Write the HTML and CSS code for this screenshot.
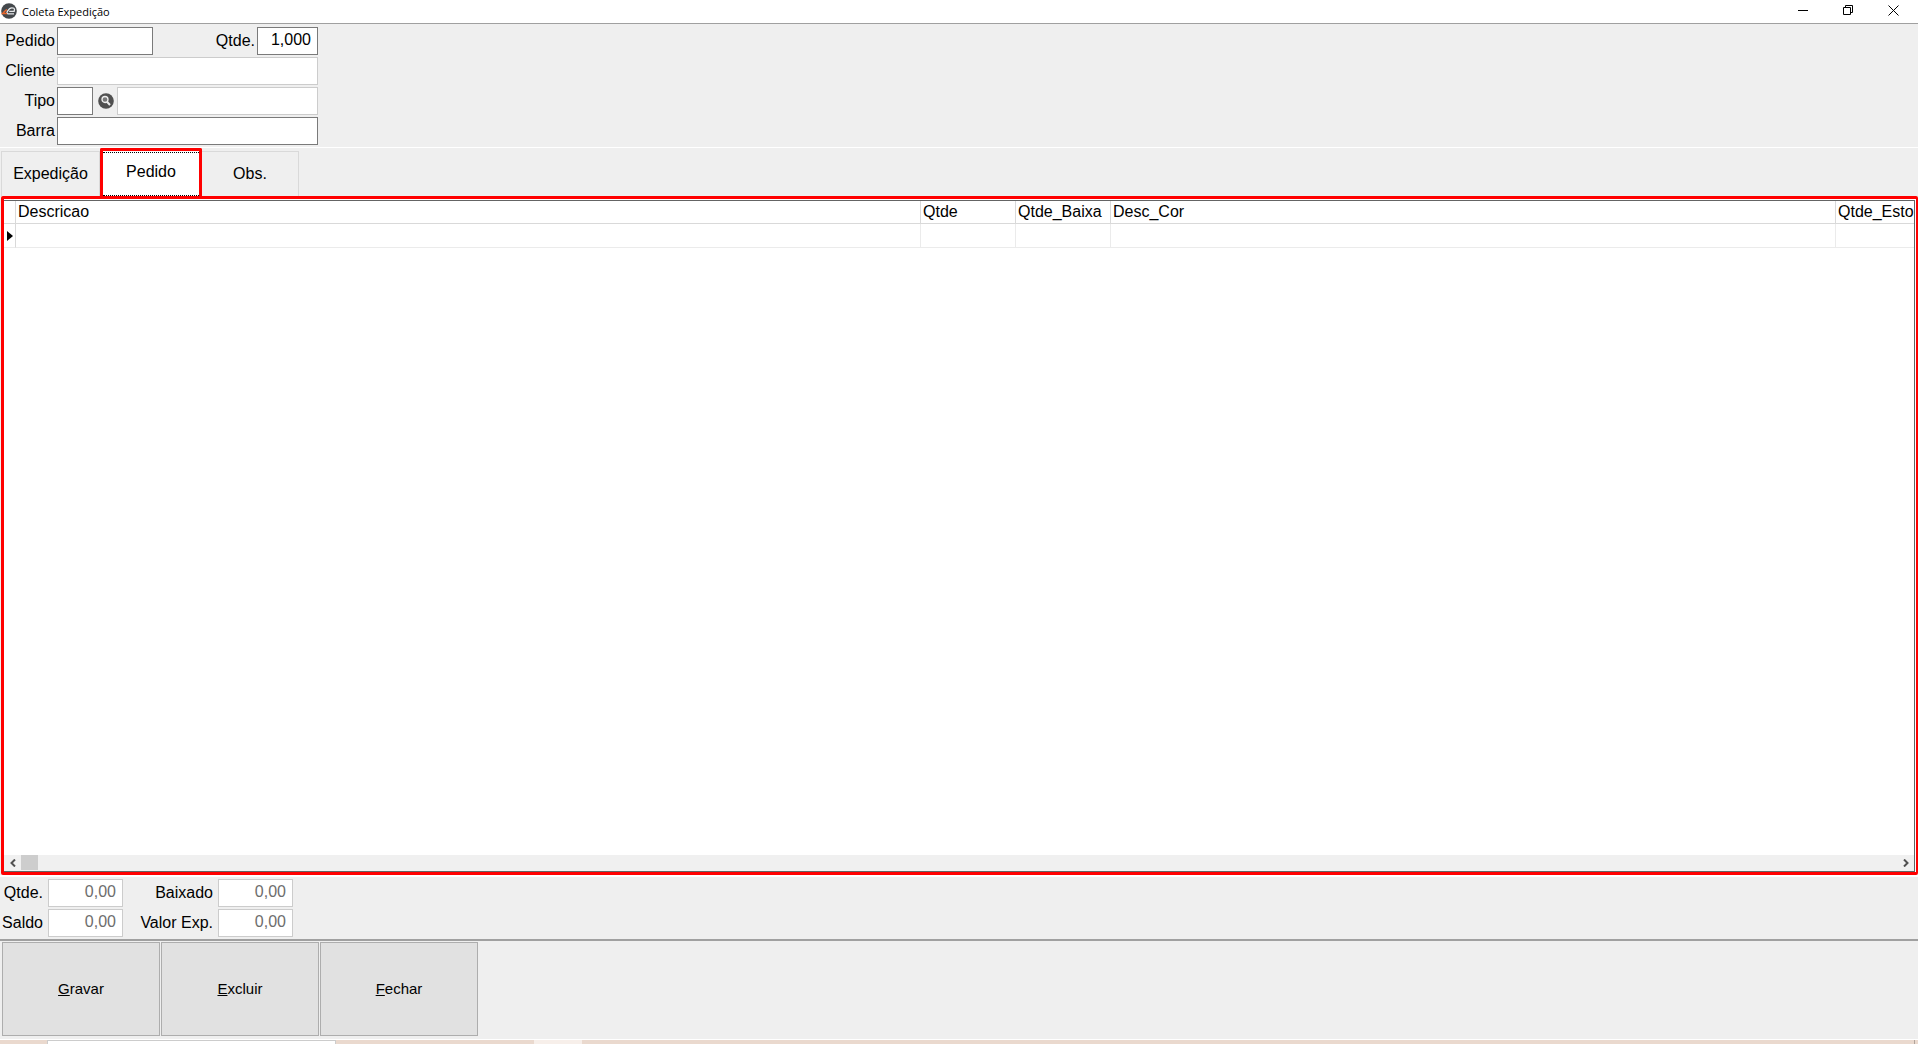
FILE: index.html
```html
<!DOCTYPE html>
<html lang="pt-BR">
<head>
<meta charset="utf-8">
<title>Coleta Expedição</title>
<link rel="stylesheet" href="styles.css">
</head>
<body>
<header class="titlebar">
  <svg class="app-icon" viewBox="0 0 16 16" aria-hidden="true">
    <circle cx="8" cy="8" r="7.800" fill="#44484c"/>
    <path d="M8.200 8.300H13.200C14.200 5.200 12.700 4.800 10.800 4.800C8.200 4.800 7.400 6.800 6.300 8.600C5.300 10.300 6.200 10.800 7.500 10.800H13" fill="none" stroke="#e6e8ea" stroke-width="1.300"/>
    <path d="M6 6.800C4.200 7.200 3.700 8.600 1.600 10.600H6" fill="none" stroke="#e8652c" stroke-width="1.500"/>
  </svg>
  <h1 class="title">Coleta Expedição</h1>
  <div class="window-controls">
    <button class="window-button" aria-label="Minimizar"><svg viewBox="0 0 11 11"><path d="M0 5.5H10" /></svg></button>
    <button class="window-button" aria-label="Restaurar"><svg viewBox="0 0 11 11"><path d="M.5 2.5H7.5V9.500H.5ZM2.500 2.500V.5H9.500V7.500H7.500"/></svg></button>
    <button class="window-button" aria-label="Fechar janela"><svg viewBox="0 0 11 11"><path d="M.5 .5L10.500 10.500M10.500 .5L.5 10.500"/></svg></button>
  </div>
</header>

<main class="window">
  <form class="order-form">
    <label class="label" for="pedido">Pedido</label>
    <div class="fields">
      <input class="field code" id="pedido" type="text">
      <label class="label push" for="quantidade">Qtde.</label>
      <input class="field quantity" id="quantidade" type="text" value="1,000">
    </div>
    <label class="label" for="cliente">Cliente</label>
    <div class="fields"><input class="field wide readonly" id="cliente" type="text" readonly></div>
    <label class="label" for="tipo">Tipo</label>
    <div class="fields">
      <input class="field type" id="tipo" type="text">
      <button class="lookup" type="button" aria-label="Pesquisar tipo">
        <svg viewBox="0 0 16 16"><circle cx="8" cy="8" r="7.8" fill="#505050"/><circle cx="7" cy="6.500" r="3" fill="#777" stroke="#eee" stroke-width="1.300"/><path d="M9.200 9L12 12" stroke="#eee" stroke-width="2"/></svg>
      </button>
      <input class="field wide readonly" type="text" aria-label="Descrição do tipo" readonly>
    </div>
    <label class="label" for="barra">Barra</label>
    <div class="fields"><input class="field wide" id="barra" type="text"></div>
  </form>

  <nav class="tabs" role="tablist">
    <button class="tab" role="tab">Expedição</button>
    <button class="tab active" role="tab" aria-selected="true"><span class="focus">Pedido</span></button>
    <button class="tab" role="tab">Obs.</button>
  </nav>

  <section class="panel">
    <div class="grid">
      <table class="items">
        <colgroup><col class="c-mark"><col class="c-name"><col class="c-num"><col class="c-num"><col class="c-color"><col></colgroup>
        <thead><tr><th></th><th>Descricao</th><th>Qtde</th><th>Qtde_Baixa</th><th>Desc_Cor</th><th>Qtde_Esto</th></tr></thead>
        <tbody><tr><td class="mark"><svg viewBox="0 0 6 10"><path d="M0 0L6 5L0 10Z"/></svg></td><td></td><td></td><td></td><td></td><td></td></tr></tbody>
      </table>
      <div class="scrollbar">
        <button class="arrow" aria-label="Rolar para a esquerda"><svg viewBox="0 0 6 8"><path d="M5 .5L1.500 4L5 7.500"/></svg></button>
        <div class="thumb"></div>
        <button class="arrow end" aria-label="Rolar para a direita"><svg viewBox="0 0 6 8"><path d="M1 .5L4.500 4L1 7.500"/></svg></button>
      </div>
    </div>
  </section>

  <section class="totals">
    <label class="label" for="total">Qtde.</label>
    <input class="field readonly total" id="total" value="0,00" readonly>
    <label class="label" for="baixado">Baixado</label>
    <input class="field readonly total" id="baixado" value="0,00" readonly>
    <label class="label" for="saldo">Saldo</label>
    <input class="field readonly total" id="saldo" value="0,00" readonly>
    <label class="label" for="valor">Valor Exp.</label>
    <input class="field readonly total" id="valor" value="0,00" readonly>
  </section>

  <footer class="actions">
    <button class="action" accesskey="g"><u>G</u>ravar</button>
    <button class="action" accesskey="e"><u>E</u>xcluir</button>
    <button class="action" accesskey="f"><u>F</u>echar</button>
  </footer>
</main>
<div class="backdrop"><span class="sheet"></span><span class="patch"></span><span class="edge"></span></div>
</body>
</html>
```
FILE: styles.css
```css
* { box-sizing: border-box; }

body {
  margin: 0;
  min-height: 100vh;
  display: flex;
  flex-direction: column;
  background: #efefef;
  color: #000;
  font: 16px/20px "Liberation Sans", Arial, sans-serif;
}

button, input { font: inherit; color: inherit; border-radius: 0; margin: 0; padding: 0; }
button { border: 0; background: none; }
svg { display: block; }

/* Title bar */
.titlebar {
  height: 24px;
  display: flex;
  align-items: center;
  padding-left: 1px;
  background: #fff;
  border-bottom: 1px solid #a0a0a0;
}
.app-icon { width: 16px; height: 16px; margin: 0 5px 2px 0; }
.title { margin: 0; font: 11px/20px "Open Sans", "Noto Sans", sans-serif; }
.window-controls { display: flex; margin-left: auto; padding: 0 2px 2px 0; }
.window-button { width: 45px; height: 20px; display: grid; place-items: center; }
.window-button svg { width: 11px; height: 11px; fill: none; stroke: #000; }

.window { flex: 1; display: flex; flex-direction: column; }

/* Order fields */
.order-form {
  display: grid;
  grid-template-columns: 55px 261px;
  gap: 2px;
  padding: 3px 0 2px;
  border-bottom: 1px solid #fff;
}
.label { line-height: 28px; text-align: right; white-space: nowrap; }
.fields { display: flex; }
.push { margin-left: auto; margin-right: 2px; }
.field {
  height: 28px;
  min-width: 0;
  border: 1px solid #7a7a7a;
  background: #fff;
  outline: 0;
}
.readonly { border-color: #ccc; color: #6d6d6d; }
.code { width: 96px; }
.quantity { width: 61px; padding: 0 6px 2px 0; text-align: right; }
.type { width: 36px; }
.wide { flex: 1; }
.lookup { width: 24px; display: grid; place-items: center; padding-left: 2px; }
.lookup svg { width: 16px; height: 16px; }

/* Tabs */
.tabs { display: flex; align-items: flex-end; padding-left: 1px; height: 48px; }
.tab { width: 99px; height: 45px; border: 1px solid #d9d9d9; border-bottom: 0; padding-bottom: 1px; }
.tab:last-child { width: 97px; border-left: 0; }
.tab.active {
  width: 102px;
  height: 48px;
  padding: 0;
  border: 3px solid #f00;
  border-bottom: 0;
  border-radius: 2px 2px 0 0;
  background: #fff;
}
.focus {
  display: flex;
  align-items: center;
  justify-content: center;
  height: 44px;
  padding-bottom: 4px;
  border: 1px dotted #000;
  border-width: 1px 0;
}

/* Item grid */
.panel {
  flex: 1;
  display: flex;
  min-width: 0;
  margin-left: 1px;
  padding: 1px 1px 0 0;
  border: 3px solid #f00;
  border-right-width: 2px;
  border-radius: 2px;
  background: #fff;
}
.grid {
  flex: 1;
  min-width: 0;
  display: flex;
  flex-direction: column;
  border: 1px solid #646464;
  border-left: 0;
  overflow: hidden;
}
.items { width: 100%; table-layout: fixed; border-collapse: separate; border-spacing: 0; }
.c-mark { width: 12px; }
.c-name { width: 905px; }
.c-num { width: 95px; }
.c-color { width: 725px; }
.items th, .items td { padding: 0 0 0 2px; border: solid #ebebeb; border-width: 0 1px 1px 0; }
.items th { height: 23px; border-color: #d9d9d9; font-weight: 400; text-align: left; white-space: nowrap; }
.items td { height: 24px; }
.items th:last-child, .items td:last-child { border-right: 0; }
.items .mark { border-right-color: #d9d9d9; padding-left: 3px; }
.mark svg { width: 6px; height: 10px; }

.scrollbar { display: flex; height: 16px; margin-top: auto; background: #f0f0f0; }
.arrow { width: 17px; display: grid; place-items: center; }
.arrow svg { width: 6px; height: 8px; fill: none; stroke: #505050; stroke-width: 2; }
.thumb { width: 17px; height: 15px; background: #cdcdcd; }
.end { margin-left: auto; }

/* Totals */
.totals {
  display: grid;
  grid-template-columns: 44px 75px 87px 75px;
  column-gap: 4px;
  row-gap: 2px;
  padding: 2px 0;
  border-top: 2px solid #fff;
  border-bottom: 2px solid #a0a0a0;
}
.totals .label { padding-right: 1px; }
.total { padding: 0 6px 2px 0; text-align: right; }

/* Actions */
.actions { display: flex; gap: 1px; padding: 1px 2px 3px; border-bottom: 1px solid #fff; }
.action { width: 158px; height: 94px; border: 1px solid #adadad; background: #e1e1e1; font-size: 15px; }

/* Strip of the desktop under the window */
.backdrop { display: flex; height: 4px; background: #ead9ce; }
.sheet { width: 287px; margin: 1px 199px 0 48px; background: #fff; box-shadow: 0 0 0 1px #ccc; }
.patch { width: 48px; background: #f7efea; }
.edge { width: 1px; margin: 0 3px 0 auto; background: #b0a49c; }
```
